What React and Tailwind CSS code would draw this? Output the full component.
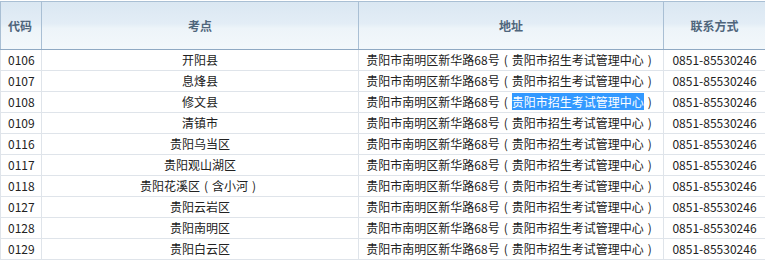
import React from "react";

const rows = [
  { code: "0106", site: "开阳县" },
  { code: "0107", site: "息烽县" },
  { code: "0108", site: "修文县", selected: true },
  { code: "0109", site: "清镇市" },
  { code: "0116", site: "贵阳乌当区" },
  { code: "0117", site: "贵阳观山湖区" },
  { code: "0118", site: "贵阳花溪区", note: "含小河" },
  { code: "0127", site: "贵阳云岩区" },
  { code: "0128", site: "贵阳南明区" },
  { code: "0129", site: "贵阳白云区" },
];

const font = { fontFamily: '"Noto Sans CJK SC", "Noto Sans", sans-serif' };

// centred parens like the YaHei fullwidth glyphs
const Paren = ({ children }) => (
  <span className="inline-block w-[12px] text-center">{children}</span>
);

export default function App() {
  return (
    <div className="w-[765px] h-[261px] bg-white overflow-hidden" style={font}>
      <table className="w-[765px] border-collapse table-fixed text-[12px] mt-px">
        <colgroup>
          <col className="w-[41px]" />
          <col className="w-[317px]" />
          <col className="w-[305px]" />
          <col className="w-[102px]" />
        </colgroup>
        <thead>
          <tr className="h-[48px] bg-[linear-gradient(to_bottom,#dae7f2,#e3edf6_45%,#edf4f9_55%,#f3f8fb)] text-[#4f657b]">
            <th className="border border-[#a9bfd4] border-b-[#8fa9c3] text-left pl-[7px] font-bold">代码</th>
            <th className="border border-[#a9bfd4] border-b-[#8fa9c3] text-center font-bold">考点</th>
            <th className="border border-[#a9bfd4] border-b-[#8fa9c3] text-center font-bold">地址</th>
            <th className="border border-[#a9bfd4] border-b-[#8fa9c3] text-center font-bold">联系方式</th>
          </tr>
        </thead>
        <tbody className="text-[#222]">
          {rows.map((r) => (
            <tr key={r.code} className="h-[21px]">
              <td className="border border-[#dfe4ea] pl-[7px] leading-[20px]">{r.code}</td>
              <td className="border border-[#dfe4ea] text-center leading-[20px] whitespace-nowrap">
                {r.site}
                {r.note && (
                  <>
                    <Paren>(</Paren>
                    {r.note}
                    <Paren>)</Paren>
                  </>
                )}
              </td>
              <td className="border border-[#dfe4ea] text-center leading-[20px] whitespace-nowrap">
                贵阳市南明区新华路68号<Paren>(</Paren>
                {r.selected ? (
                  <span className="bg-[#3399ff] text-white">贵阳市招生考试管理中心</span>
                ) : (
                  "贵阳市招生考试管理中心"
                )}
                <Paren>)</Paren>
              </td>
              <td className="border border-[#dfe4ea] text-center leading-[20px] whitespace-nowrap">0851-85530246</td>
            </tr>
          ))}
        </tbody>
      </table>
    </div>
  );
}
